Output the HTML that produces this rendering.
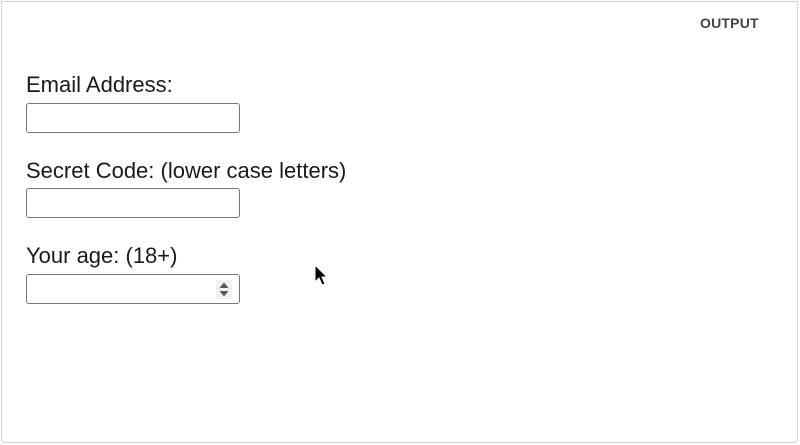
<!DOCTYPE html>
<html><head><meta charset="utf-8"><style>
html,body{margin:0;padding:0;background:#fff;}
body{width:800px;height:445px;position:relative;overflow:hidden;font-family:"Liberation Sans",sans-serif;}
.frame{position:absolute;left:1px;top:1px;width:797px;height:442px;border:1px solid #d4d4d4;border-radius:0 0 4px 4px;box-sizing:border-box;}
.out{position:absolute;left:700px;top:15px;font-size:14px;font-weight:bold;color:#444;letter-spacing:0.2px;}
.lbl{position:absolute;left:26px;font-size:22px;color:#1a1a1a;}
.in{position:absolute;left:26px;width:214px;height:30px;border:1px solid #767676;border-radius:3px;box-sizing:border-box;background:#fff;}
.spin{position:absolute;right:7px;top:5px;width:16px;height:19px;}
</style></head><body>
<div class="frame"></div>
<div class="out">OUTPUT</div>
<div class="lbl" style="top:72px">Email Address:</div>
<div class="in" style="top:103px"></div>
<div class="lbl" style="top:158px">Secret Code: (lower case letters)</div>
<div class="in" style="top:188px"></div>
<div class="lbl" style="top:243px">Your age: (18+)</div>
<div class="in" style="top:274px">
<svg class="spin" viewBox="0 0 16 19"><rect width="16" height="19" fill="#f0f0f0"/><path d="M3.5 8 L8 2.5 L12.5 8Z M3.5 11 L8 16.5 L12.5 11Z" fill="#555"/></svg>
</div>
<svg style="position:absolute;left:314px;top:264px" width="16" height="24" viewBox="0 0 16 24"><path d="M1 1 L1 18 L5 14 L8 21 L11 20 L8 13 L13 13 Z" fill="#000" stroke="#fff" stroke-width="1"/></svg>
</body></html>
